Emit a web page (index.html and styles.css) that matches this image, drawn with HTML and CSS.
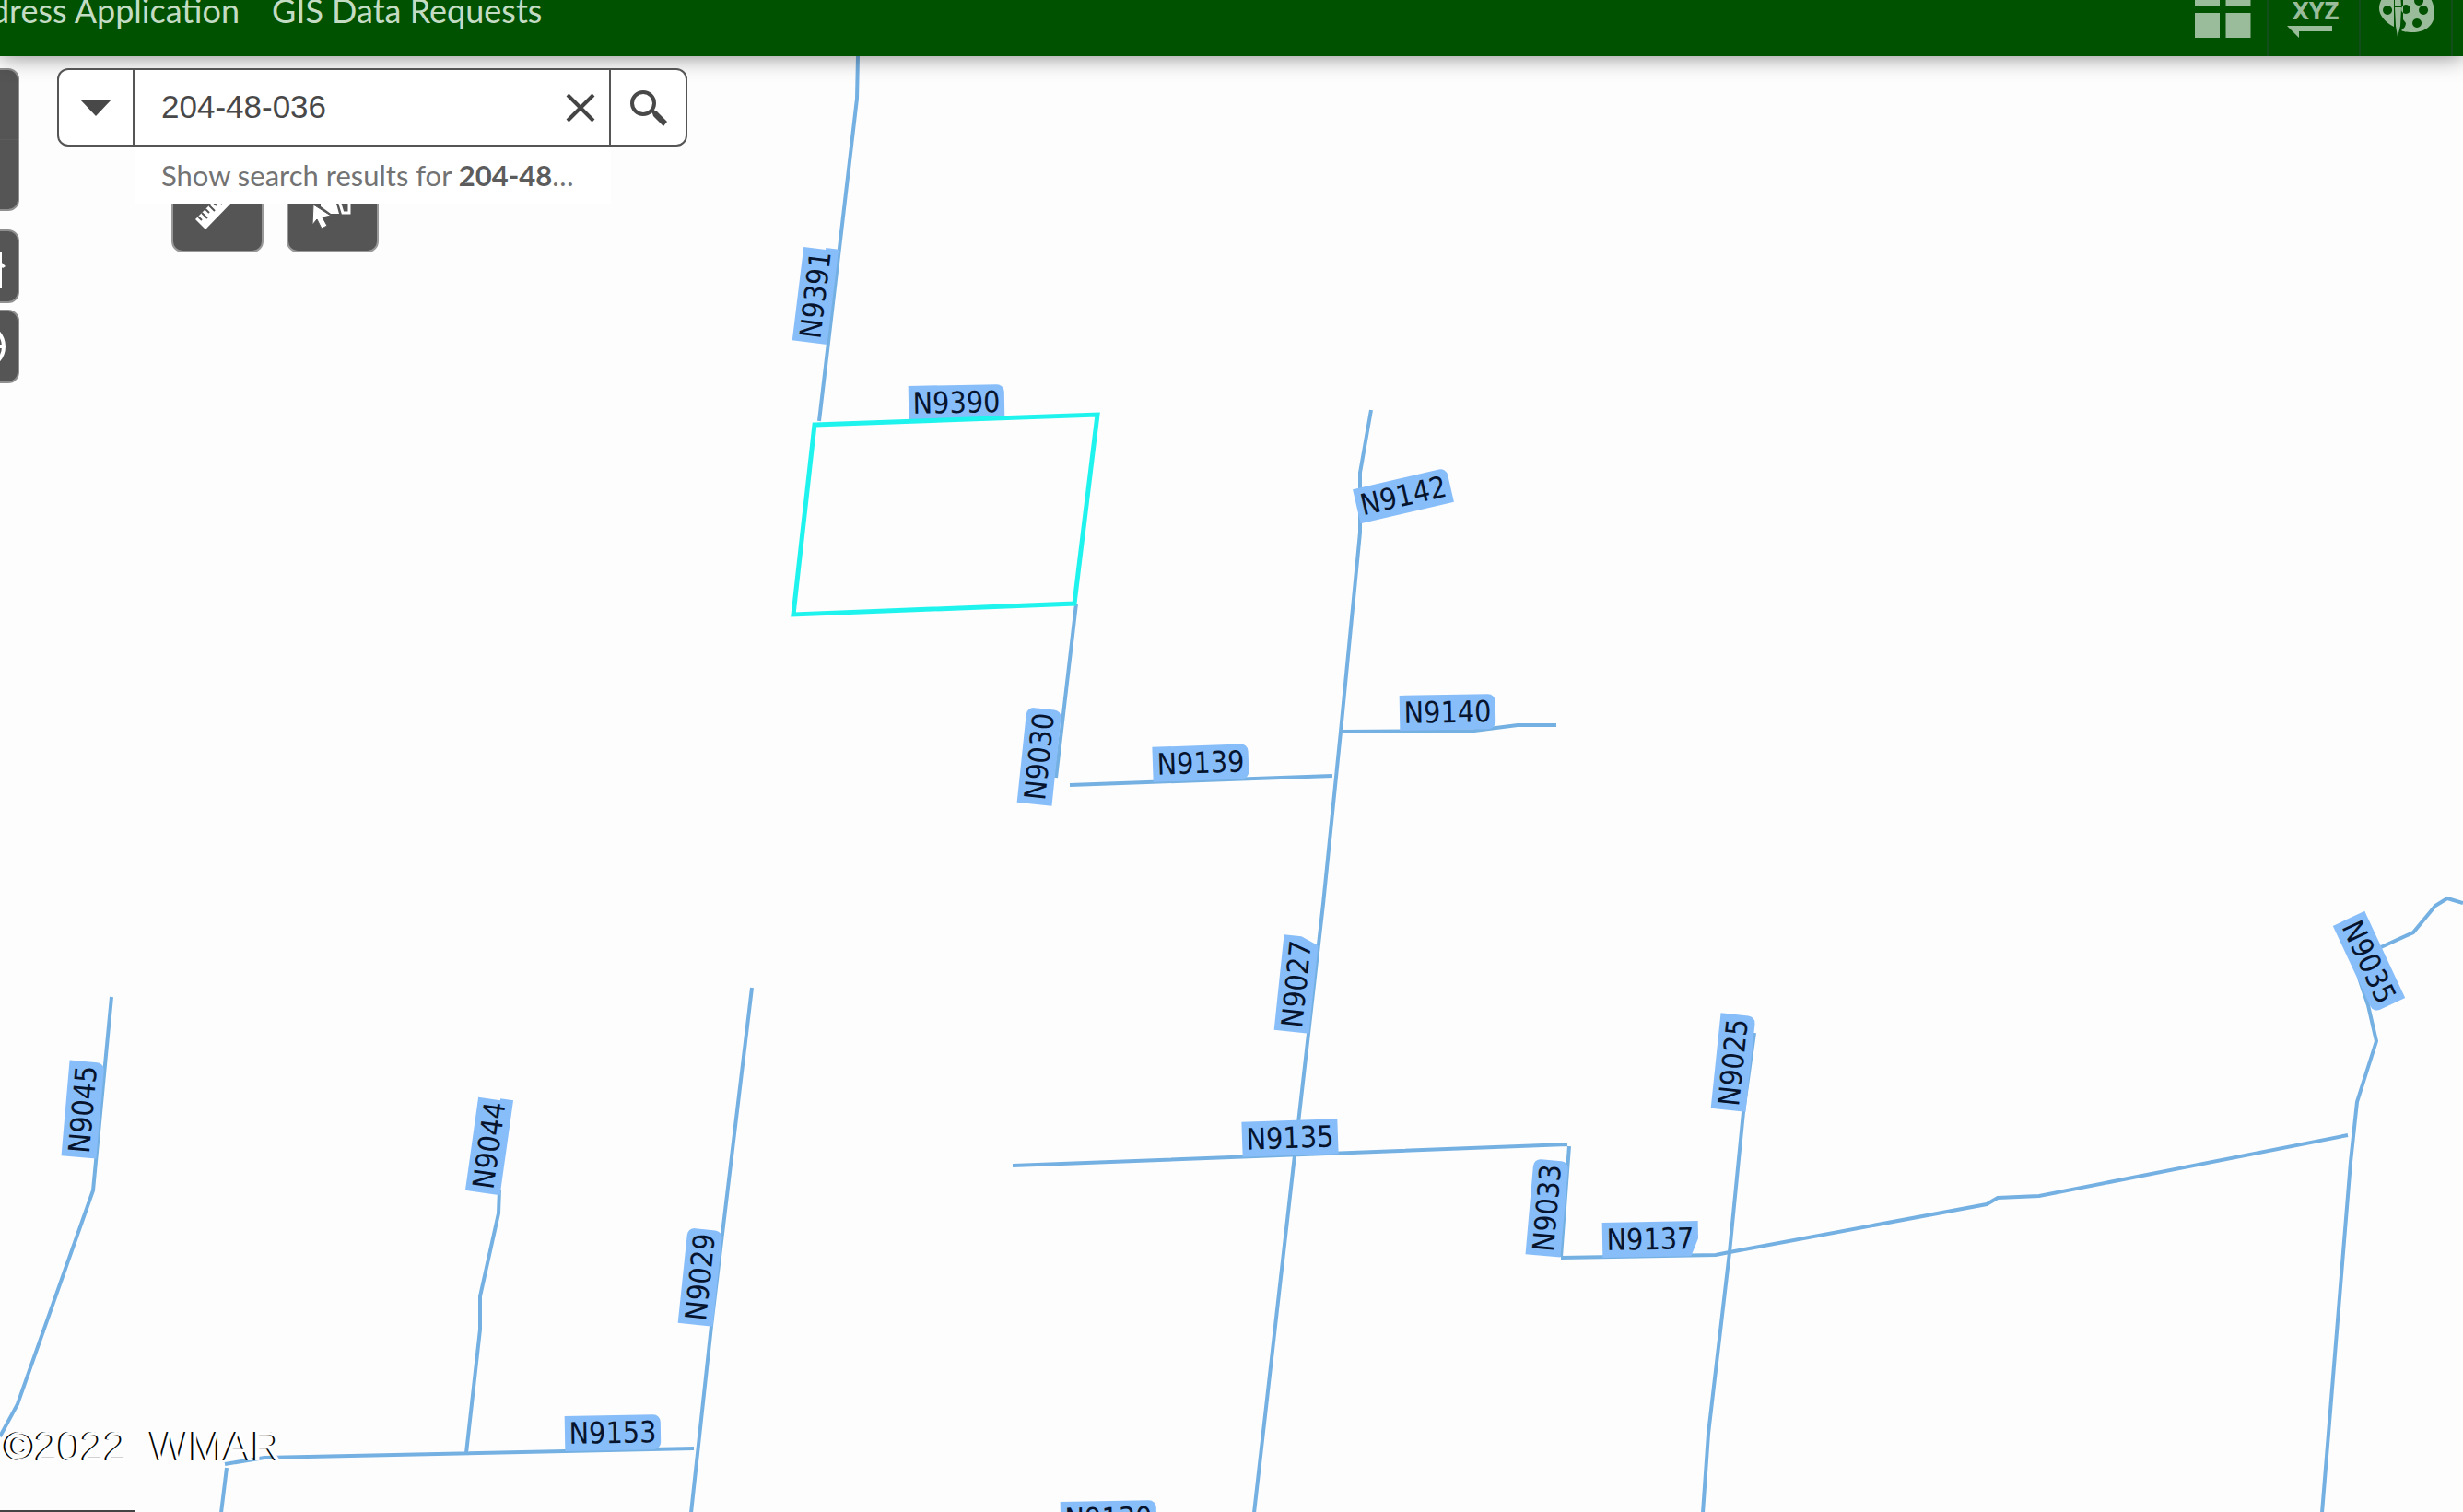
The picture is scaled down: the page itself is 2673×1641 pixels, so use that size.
FILE: index.html
```html
<!DOCTYPE html>
<html lang="en">
<head>
<meta charset="utf-8">
<title>GIS Map Viewer</title>
<link rel="stylesheet" href="styles.css">
</head>
<body>
<header class="header">
  <nav class="links">
    <a class="link link-first" href="#application">dress Application</a>
    <a class="link" href="#requests">GIS Data Requests</a>
  </nav>
  <div class="widgets">
    <button class="widget" aria-label="Basemap gallery">
      <svg class="widget-icon" viewBox="0 0 100 61"><path d="M20-20h27V7H20zM53.500-20h27V7h-27zM20 14h27v27H20zM53.500 14h27v27h-27z"/></svg>
    </button>
    <button class="widget" aria-label="Coordinates">
      <svg class="widget-icon" viewBox="0 0 100 61"><text class="xyz" x="51" y="21" text-anchor="middle">XYZ</text><path d="M20 28h49v6H33v7z"/></svg>
    </button>
    <button class="widget" aria-label="Draw">
      <svg class="widget-icon" viewBox="0 0 100 61"><path fill-rule="evenodd" d="M50-16C68-16 80-2 80 14c0 14-10 21-24 21-6 0-11-1-12-2 3-2 5-5 5-8l-3-4V-16zM63-4a5 5 0 1 0 .1 0zM68 6a5 5 0 1 0 .1 0zM61 20a5 5 0 1 0 .1 0zM49 5a5 5 0 1 0 .1 0zM36-12V29C26 24 20 16 20 9 20 0 27-9 36-12zM29 6a5 5 0 1 0 .1 0z"/><path d="M37-8h6l1 15h-7zM37 8h7l-1 20-3 12-2-12z"/></svg>
    </button>
  </div>
</header>
<main class="map">
  <svg class="canvas" aria-label="Road map">
    <defs>
      <path id="tag" d="M-52-19H52V19H-52z"/>
      <path id="tag-top" d="M-52-19H44a8 8 0 0 1 8 8V19H-52z"/>
      <path id="tag-low" d="M-52-19H52V11a8 8 0 0 1-8 8H-52z"/>
      <path id="tag-round" d="M-52-19H44a8 8 0 0 1 8 8V11a8 8 0 0 1-8 8H-52z"/>
      <path id="tag-cut" d="M-52-19H52V0L44 19H-52z"/>
      <path id="tag-step" d="M-52-19H50V5H52V19H-52z"/>
    </defs>
    <g transform="translate(0 -60)">
      <g class="roads">
        <path d="M931 60L930 106 889 456M1168 654L1146 843M1161 851L1446 841M1488 444L1476 512V577L1455 793 1436 980 1405 1253 1361 1641"/>
        <path d="M1455 793L1600 792 1647 786H1689M1099 1264L1701 1241M1703 1243L1694 1363M1694 1364L1862 1361 1877 1358 2156 1306 2168 1299 2213 1297 2548 1231"/>
        <path d="M1904 1120L1892 1206 1877 1358 1854 1555 1848 1641M2584 1027L2619 1011 2643 982 2656 974 2673 979M2560 1060L2570 1090 2579 1129 2558 1195 2551 1260 2520 1641"/>
        <path d="M121 1081L101 1291 19 1523 0 1558M542 1290L541 1316 521 1406V1442L506 1576M816 1071L772 1438 750 1641M244 1588L287 1581 753 1571M246 1592L240 1641"/>
      </g>
      <g class="tags">
        <g transform="translate(885 319) rotate(-83)"><use href="#tag-step"/><text y="11">N9391</text></g>
        <g transform="translate(1038 436) rotate(-1)"><use href="#tag-top"/><text y="11">N9390</text></g>
        <g transform="translate(1523 537) rotate(-13)"><use href="#tag-top"/><text y="11">N9142</text></g>
        <g transform="translate(1571 772) rotate(-1)"><use href="#tag-round"/><text y="11">N9140</text></g>
        <g transform="translate(1303 827) rotate(-2)"><use href="#tag-round"/><text y="11">N9139</text></g>
        <g transform="translate(1128 820) rotate(-84)"><use href="#tag-round"/><text y="11">N9030</text></g>
        <g transform="translate(1407 1067) rotate(-84)"><use href="#tag-cut"/><text y="11">N9027</text></g>
        <g transform="translate(1881 1152) rotate(-84)"><use href="#tag-low"/><text y="11">N9025</text></g>
        <g transform="translate(2571 1043) rotate(65)"><use href="#tag-low"/><text y="11">N9035</text></g>
        <g transform="translate(1400 1234) rotate(-2)"><use href="#tag"/><text y="11">N9135</text></g>
        <g transform="translate(1679 1310) rotate(-85)"><use href="#tag-round"/><text y="11">N9033</text></g>
        <g transform="translate(1791 1344) rotate(-1)"><use href="#tag-cut"/><text y="11">N9137</text></g>
        <g transform="translate(90 1203) rotate(-85)"><use href="#tag-low"/><text y="11">N9045</text></g>
        <g transform="translate(531 1242) rotate(-82)"><use href="#tag-step"/><text y="11">N9044</text></g>
        <g transform="translate(760 1385) rotate(-84)"><use href="#tag-round"/><text y="11">N9029</text></g>
        <g transform="translate(665 1554) rotate(-1)"><use href="#tag-round"/><text y="11">N9153</text></g>
        <g transform="translate(1203 1647) rotate(-1)"><use href="#tag-top"/><text y="11">N9130</text></g>
      </g>
      <path class="parcel" d="M884 460L1191 449 1166 654 861 666z"/>
    </g>
  </svg>
  <div class="overlay">
    <div class="rail">
      <div class="zoom-group">
        <button class="zoom-button" aria-label="Zoom in"></button>
        <button class="zoom-button" aria-label="Zoom out"></button>
      </div>
      <button class="rail-button" aria-label="Home"><svg class="rail-icon" viewBox="0 0 60 60"><path d="M30 6L44 19V14h7v12l4 4-3 2-1-1V54H36V38H24v16H9V31l-4-1z"/></svg></button>
      <button class="rail-button" aria-label="My location"><svg class="rail-icon" viewBox="0 0 60 60"><circle cx="30" cy="30" r="23" fill="none" stroke="#fff" stroke-width="4"/><path d="M28 0h4v20h-4zM28 40h4v20h-4zM40 28h14v4H40zM6 28h14v4H6z"/></svg></button>
    </div>
    <div class="tools-column">
      <form class="search">
        <button class="search-source" type="button" aria-label="Search source"><svg width="34" height="18" viewBox="0 0 34 18"><path d="M0 0h34L17 18z"/></svg></button>
        <input class="search-input" type="text" aria-label="Search" value="204-48-036">
        <button class="search-clear" type="button" aria-label="Clear"><svg width="32" height="32" viewBox="0 0 32 32"><path d="M2 2l28 28M30 2L2 30" fill="none" stroke="#444" stroke-width="4"/></svg></button>
        <button class="search-submit" type="submit" aria-label="Find"><svg width="40" height="40" viewBox="0 0 40 40"><circle cx="14" cy="15" r="12" fill="none" stroke="#484848" stroke-width="4"/><path d="M22 24l3-2 4 2 11 11-4 5-11-11-1-3z"/></svg></button>
        <a class="suggestion" href="#results">Show search results for <b>204-48</b>…</a>
      </form>
      <div class="tools">
        <button class="tool" aria-label="Measure"><svg class="tool-icon" viewBox="0 0 96 96"><path fill="#fff" d="M24 62L35 73 72 35 61 25z"/><path stroke="#555" stroke-width="2" d="M27 59l4 4M31 55l6 6M35 51l4 4M39 47l6 6M43 43l4 4M47 39l6 6"/></svg></button>
        <button class="tool" aria-label="Select"><svg class="tool-icon" viewBox="0 0 96 96"><path fill="#fff" d="M35 30h13l7 26h-9L35 48z"/><path fill="none" stroke="#fff" stroke-width="3" d="M52 32h14v23h-7z"/><path fill="#fff" stroke="#555" d="M27 46l19 12-9 2 5 9-6 3-5-10-5 6z"/></svg></button>
      </div>
    </div>
  </div>
  <p class="copyright">©2022  WMAR</p>
  <div class="table-handle"></div>
</main>
</body>
</html>
```

FILE: styles.css
```css
* { box-sizing: border-box; }
body {
  margin: 0;
  height: 100vh;
  display: flex;
  flex-direction: column;
  overflow: hidden;
  font-family: Lato, sans-serif;
  background: #fdfdfd;
}
button {
  padding: 0;
  border: 0;
  background: none;
  font: inherit;
}
svg { display: block; }
.header {
  position: relative;
  z-index: 1;
  display: flex;
  justify-content: space-between;
  height: 61px;
  padding-right: 11px;
  background: #005200;
  box-shadow: 0 0 24px rgba(0, 0, 0, .5);
}
.links { display: flex; gap: 35px; }
.link {
  font-size: 36px;
  line-height: 22px;
  color: #c4dcc4;
  text-decoration: none;
  white-space: pre;
}
.link-first {
  display: flex;
  justify-content: flex-end;
  width: 260px;
}
.widgets { display: flex; }
.widget {
  width: 100px;
  border-right: 2px solid #124e1c;
  overflow: hidden;
}
.widget-icon {
  width: 100px;
  height: 61px;
  fill: #9bbc9b;
}
.xyz { font: 700 27px "Noto Sans", sans-serif; }
.map {
  position: relative;
  flex: 1;
  min-height: 0;
  display: flex;
  flex-direction: column;
  justify-content: space-between;
}
.canvas {
  position: absolute;
  inset: 0;
  width: 100%;
  height: 100%;
}
.roads { fill: none; stroke: #74b0e2; stroke-width: 4; }
.parcel { fill: none; stroke: #1ff3ee; stroke-width: 5; }
.tags { fill: #87bdf9; }
.tags text {
  font: 32px "DejaVu Sans Condensed", "Noto Sans", sans-serif;
  fill: #07142e;
  text-anchor: middle;
}
.overlay {
  position: relative;
  flex: 1;
  display: flex;
  align-items: flex-start;
  gap: 41px;
  padding-top: 13px;
}
.rail {
  display: flex;
  flex-direction: column;
  gap: 7px;
  width: 80px;
  margin-left: -59px;
}
.zoom-group {
  display: flex;
  flex-direction: column;
  height: 155px;
  margin-bottom: 13px;
  border: 2px solid #8f8f8f;
  border-radius: 12px;
  overflow: hidden;
  background: #555;
}
.zoom-button { flex: 1; }
.zoom-button + .zoom-button { border-top: 1px solid #5c5c5c; }
.rail-button {
  display: flex;
  align-items: center;
  justify-content: center;
  height: 80px;
  border: 2px solid #8f8f8f;
  border-radius: 12px;
  background: #555;
}
.rail-icon { width: 60px; height: 60px; fill: #fff; }
.tools-column { width: 684px; }
.search {
  position: relative;
  z-index: 1;
  display: flex;
  height: 85px;
  margin: 0 0 15px;
  border: 2px solid #555;
  border-radius: 12px;
  background: #fff;
}
.search svg { fill: #484848; }
.search button {
  display: flex;
  align-items: center;
  justify-content: center;
}
.search .search-source { width: 82px; border-right: 2px solid #555; }
.search-input {
  flex: 1;
  min-width: 0;
  padding: 0 0 2px 29px;
  border: 0;
  outline: 0;
  background: none;
  font: 35px "Liberation Sans", sans-serif;
  color: #484848;
}
.search .search-clear { width: 63px; }
.search .search-submit { width: 83px; border-left: 2px solid #555; }
.suggestion {
  position: absolute;
  top: 83px;
  left: 82px;
  width: 517px;
  padding: 0 0 0 29px;
  background: #fff;
  font-size: 31px;
  line-height: 62px;
  color: #737373;
  text-decoration: none;
  white-space: nowrap;
}
.suggestion b { color: #5c5c5c; }
.tools {
  display: flex;
  gap: 25px;
  padding-left: 124px;
}
.tool {
  width: 100px;
  height: 100px;
  border: 2px solid #999;
  border-radius: 12px;
  background: #555;
}
.tool-icon { width: 96px; height: 96px; }
.copyright {
  position: relative;
  margin: 0 0 43px 5px;
  font: 45px/52px "Liberation Sans", sans-serif;
  white-space: pre;
  color: #fff;
  text-shadow: -2px 0 #000;
}
.table-handle {
  position: relative;
  width: 146px;
  height: 2px;
  background: #444;
}
```
